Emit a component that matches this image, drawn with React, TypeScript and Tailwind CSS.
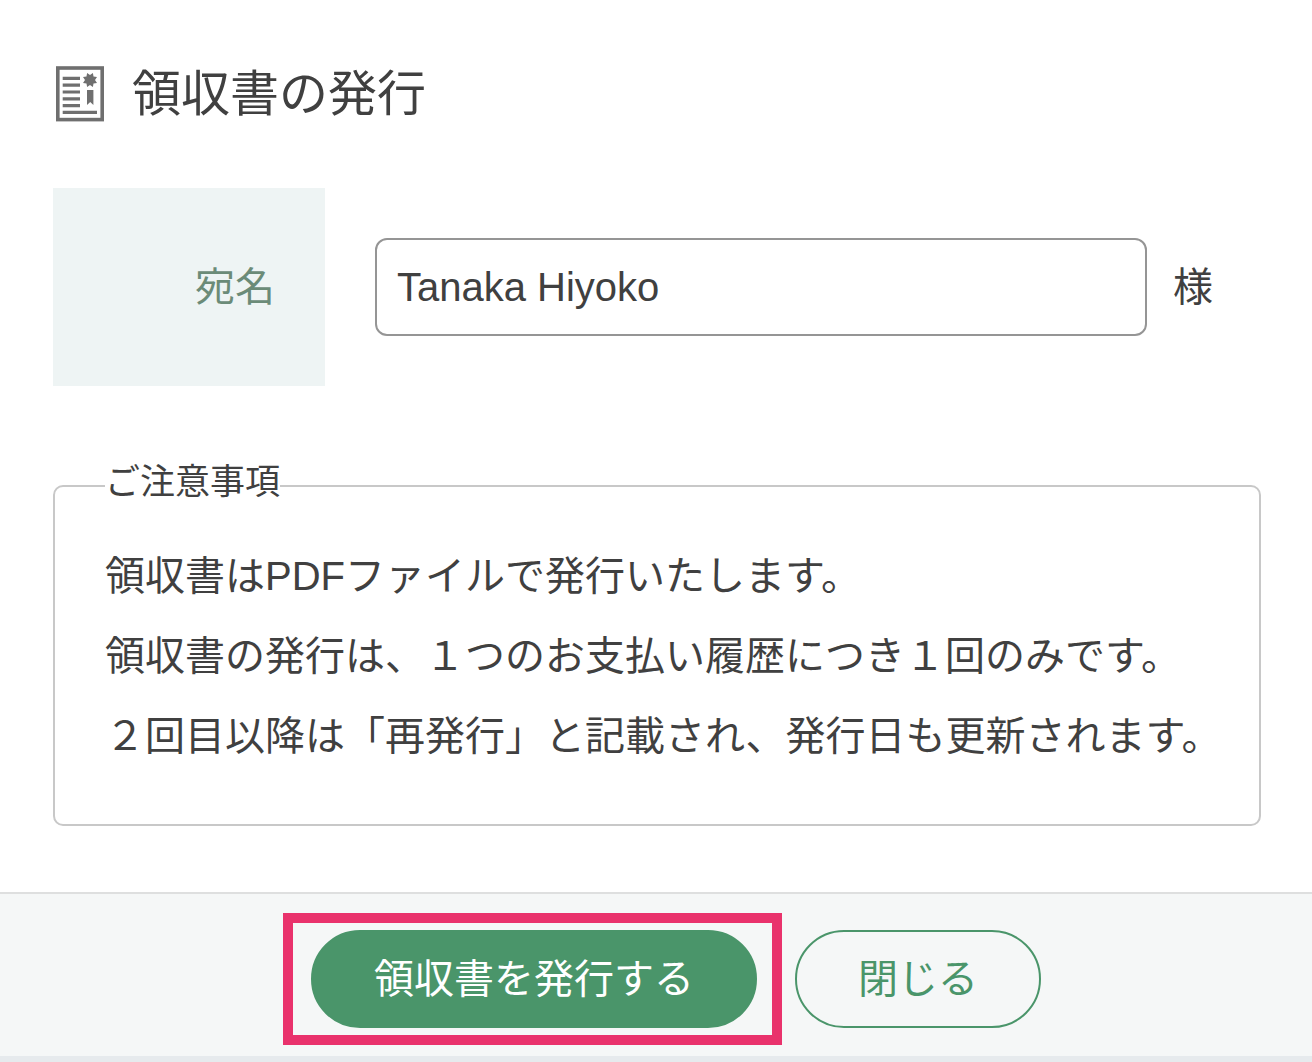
import type { JSX } from "react";

const notices = [
  "領収書はPDFファイルで発行いたします。",
  "領収書の発行は、１つのお支払い履歴につき１回のみです。",
  "２回目以降は「再発行」と記載され、発行日も更新されます。",
];

function ReceiptIcon(): JSX.Element {
  return (
    <svg
      className="h-14 w-12 shrink-0"
      viewBox="0 0 48 56"
      fill="none"
      stroke="#6f6f6f"
      aria-hidden="true"
    >
      <rect x="1.8" y="2" width="44.4" height="51.6" strokeWidth="3.6" />
      <path
        d="M6.7 12.3h17.3M6.7 19.2h17.3M6.7 26h17.3M6.7 32.8h17.3M6.7 39.7h17.3M6.7 46.4h34.3"
        strokeWidth="3.2"
      />
      <path
        d="M41 16.9l-3.5.6-.6 3.5-2.9-2-2.9 2-.6-3.5-3.5-.6 2-2.9-2-2.9 3.5-.6.6-3.5 2.9 2 2.9-2 .6 3.5 3.5.6-2 2.9z"
        fill="#6f6f6f"
        stroke="none"
      />
      <path d="M31 24h6.4v15L34.2 36 31 39z" fill="#6f6f6f" stroke="none" />
    </svg>
  );
}

export default function App(): JSX.Element {
  return (
    <form
      className="flex min-h-screen flex-col bg-white font-['Liberation_Sans','Noto_Sans_CJK_JP',sans-serif] text-[40px] text-[#404040]"
      onSubmit={(e) => e.preventDefault()}
    >
      <main className="flex-1 pr-[51px] pb-16 pl-[53px]">
        <header className="flex items-center gap-7 pt-[60px] pl-[3px]">
          <ReceiptIcon />
          <h1 className="text-[49px] leading-[68px]">領収書の発行</h1>
        </header>

        <div className="mt-[60px] flex items-center pr-12">
          <label
            htmlFor="recipient"
            className="flex h-[198px] w-[272px] shrink-0 items-center justify-end bg-[#eef4f4] pr-[50px] text-[#6b8b78]"
          >
            宛名
          </label>
          <input
            id="recipient"
            type="text"
            defaultValue="Tanaka Hiyoko"
            className="ml-[50px] h-[98px] min-w-0 flex-1 rounded-xl border-2 border-[#959595] bg-white px-5"
          />
          <span className="ml-[26px]">様</span>
        </div>

        <fieldset className="mt-[76px] rounded-[10px] border-2 border-[#c8c8c8] pr-6 pb-12 pl-[50px]">
          <legend className="pb-2 text-[35px] leading-[40px]">
            ご注意事項
          </legend>
          <div className="mt-[26px]">
            {notices.map((notice) => (
              <p key={notice} className="leading-[80px]">
                {notice}
              </p>
            ))}
          </div>
        </fieldset>
      </main>

      <footer className="flex justify-center gap-[38px] border-t-2 border-b-6 border-t-[#dedfdf] border-b-[#e6eaed] bg-[#f5f7f7] pt-9 pb-7 pl-10">
        <div className="relative">
          <button
            type="submit"
            className="h-[98px] rounded-full border-2 border-[#4a956a] bg-[#4a956a] px-[61px] text-white"
          >
            領収書を発行する
          </button>
          <span className="pointer-events-none absolute -top-[17px] -right-[25px] -bottom-[17px] -left-[28px] border-10 border-[#e9326c]" />
        </div>
        <button
          type="button"
          className="h-[98px] rounded-full border-2 border-[#4a956a] px-[61px] text-[#4a956a]"
        >
          閉じる
        </button>
      </footer>
    </form>
  );
}
